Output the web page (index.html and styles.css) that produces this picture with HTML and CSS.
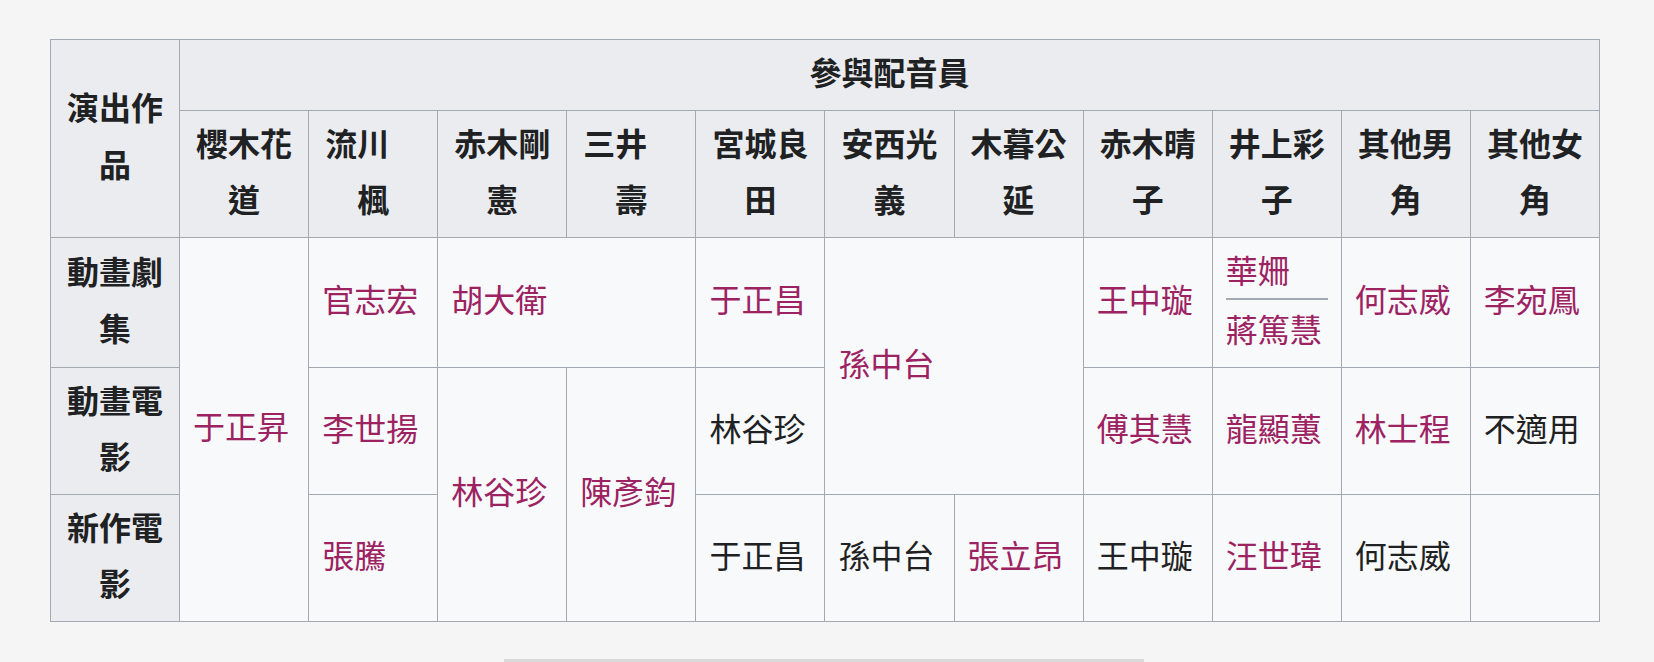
FILE: index.html
```html
<!DOCTYPE html>
<html lang="zh-Hant">
<head>
<meta charset="utf-8">
<title>配音員</title>
<link rel="stylesheet" href="styles.css">
</head>
<body>
<div class="page">
  <table class="cast">
    <colgroup>
      <col><col><col><col><col><col><col><col><col><col><col><col>
    </colgroup>
    <tr>
      <th rowspan="2">演出作品</th>
      <th colspan="11">參與配音員</th>
    </tr>
    <tr>
      <th>櫻木花道</th>
      <th class="keep-space">流川　楓</th>
      <th>赤木剛憲</th>
      <th class="keep-space">三井　壽</th>
      <th>宮城良田</th>
      <th>安西光義</th>
      <th>木暮公延</th>
      <th>赤木晴子</th>
      <th>井上彩子</th>
      <th>其他男角</th>
      <th>其他女角</th>
    </tr>
    <tr>
      <th>動畫劇集</th>
      <td rowspan="3"><a class="link">于正昇</a></td>
      <td><a class="link">官志宏</a></td>
      <td colspan="2"><a class="link">胡大衛</a></td>
      <td><a class="link">于正昌</a></td>
      <td rowspan="2" colspan="2"><a class="link">孫中台</a></td>
      <td><a class="link">王中璇</a></td>
      <td><a class="link">華姍</a><hr class="split"><a class="link">蔣篤慧</a></td>
      <td><a class="link">何志威</a></td>
      <td><a class="link">李宛鳳</a></td>
    </tr>
    <tr>
      <th>動畫電影</th>
      <td><a class="link">李世揚</a></td>
      <td rowspan="2"><a class="link">林谷珍</a></td>
      <td rowspan="2"><a class="link">陳彥鈞</a></td>
      <td>林谷珍</td>
      <td><a class="link">傅其慧</a></td>
      <td><a class="link">龍顯蕙</a></td>
      <td><a class="link">林士程</a></td>
      <td>不適用</td>
    </tr>
    <tr>
      <th>新作電影</th>
      <td><a class="link">張騰</a></td>
      <td>于正昌</td>
      <td>孫中台</td>
      <td><a class="link">張立昂</a></td>
      <td>王中璇</td>
      <td><a class="link">汪世瑋</a></td>
      <td>何志威</td>
      <td></td>
    </tr>
  </table>
  <div class="scrollbar"></div>
</div>
</body>
</html>
```

FILE: styles.css
```css
html, body {
  margin: 0;
  padding: 0;
  overflow: hidden;
  background: #f5f5f5;
}

.page {
  padding: 39px 0 0 50px;
  font-family: "Noto Sans CJK TC", "Noto Sans", sans-serif;
  color: #202122;
}

.cast {
  width: 1550px;
  table-layout: fixed;
  border-collapse: collapse;
  border: 1px solid #a2a9b1;
  font-size: 32px;
  line-height: 56.5px;
}

.cast th,
.cast td {
  border: 1px solid #a2a9b1;
  padding: 3px 13px 10px;
  vertical-align: middle;
}

.cast th {
  background: #eaecf0;
  font-weight: 700;
  text-align: center;
}

.cast th.keep-space {
  white-space: break-spaces;
}

.cast td {
  background: #f8f9fa;
  font-weight: 400;
  text-align: left;
}

.link {
  color: #9c2262;
  text-decoration: none;
}

.split {
  display: block;
  border: 0;
  height: 2px;
  margin: 1px 0 0;
  background: #a2a9b1;
}

.scrollbar {
  width: 640px;
  height: 4px;
  margin: 37px 0 0 454px;
  background: #d9d9d9;
}
```
